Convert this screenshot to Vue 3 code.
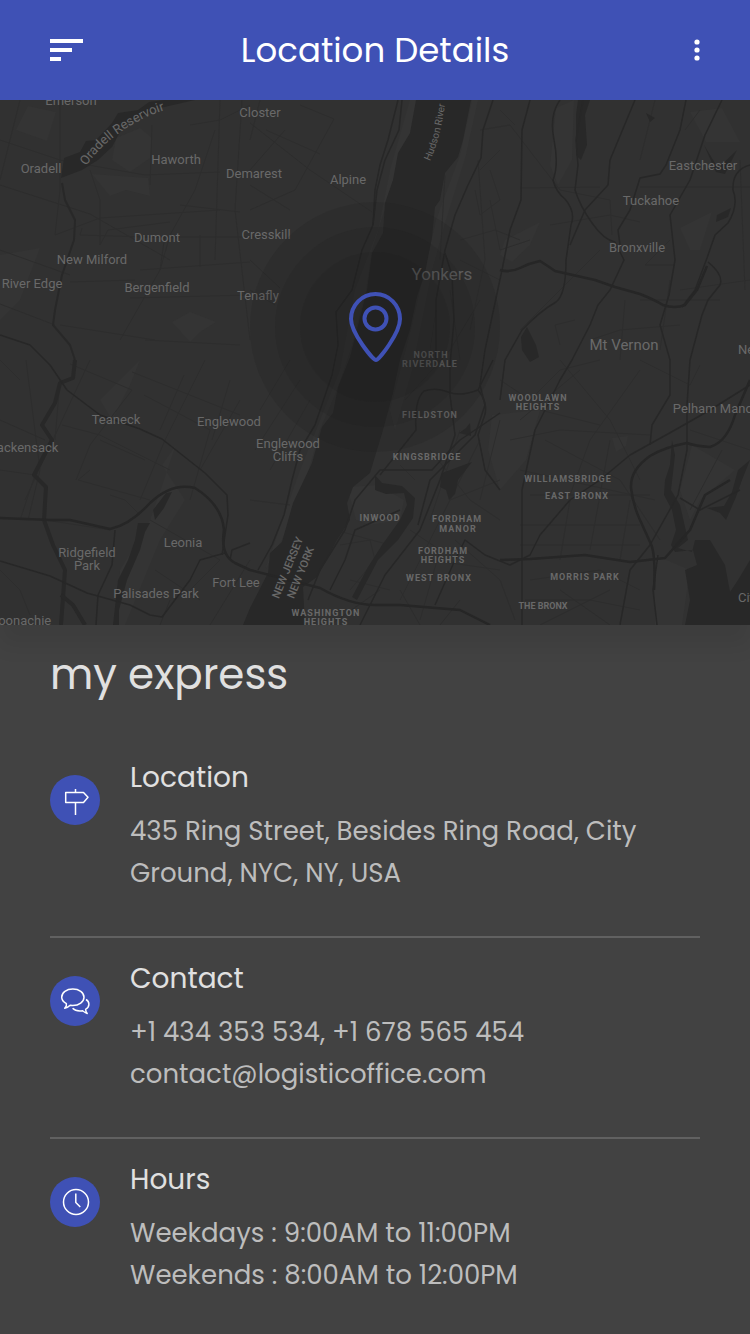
<script setup>
const towns = [
  { t: 'Emerson', x: 71, y: 105 },
  { t: 'Closter', x: 260, y: 117 },
  { t: 'Oradell', x: 41, y: 173 },
  { t: 'Haworth', x: 176, y: 164 },
  { t: 'Demarest', x: 254, y: 178 },
  { t: 'Alpine', x: 348, y: 184 },
  { t: 'Dumont', x: 157, y: 242 },
  { t: 'Cresskill', x: 266, y: 239 },
  { t: 'New Milford', x: 92, y: 264 },
  { t: 'River Edge', x: 32, y: 288 },
  { t: 'Bergenfield', x: 157, y: 292 },
  { t: 'Tenafly', x: 258, y: 300 },
  { t: 'Eastchester', x: 703, y: 170 },
  { t: 'Tuckahoe', x: 651, y: 205 },
  { t: 'Bronxville', x: 637, y: 252 },
  { t: 'Teaneck', x: 116, y: 424 },
  { t: 'Englewood', x: 229, y: 426 },
  { t: 'Englewood', x: 288, y: 448 },
  { t: 'Cliffs', x: 288, y: 461 },
  { t: 'Hackensack', x: 23, y: 452 },
  { t: 'Leonia', x: 183, y: 547 },
  { t: 'Ridgefield', x: 87, y: 557 },
  { t: 'Park', x: 87, y: 570 },
  { t: 'Fort Lee', x: 236, y: 587 },
  { t: 'Palisades Park', x: 156, y: 598 },
  { t: 'Moonachie', x: 19, y: 625 },
  { t: 'Pelham Manor', x: 715, y: 413 },
]
const districts = [
  { t: 'NORTH', x: 431, y: 358 },
  { t: 'RIVERDALE', x: 430, y: 367 },
  { t: 'FIELDSTON', x: 430, y: 418 },
  { t: 'KINGSBRIDGE', x: 427, y: 460 },
  { t: 'WOODLAWN', x: 538, y: 401 },
  { t: 'HEIGHTS', x: 538, y: 410 },
  { t: 'WILLIAMSBRIDGE', x: 568, y: 482 },
  { t: 'EAST BRONX', x: 577, y: 499 },
  { t: 'INWOOD', x: 380, y: 521 },
  { t: 'FORDHAM', x: 457, y: 522 },
  { t: 'MANOR', x: 458, y: 532 },
  { t: 'FORDHAM', x: 443, y: 554 },
  { t: 'HEIGHTS', x: 443, y: 563 },
  { t: 'WEST BRONX', x: 439, y: 581 },
  { t: 'MORRIS PARK', x: 585, y: 580 },
  { t: 'WASHINGTON', x: 326, y: 616 },
  { t: 'HEIGHTS', x: 326, y: 625 },
]
</script>

<template>
  <div class="screen">
    <header class="bar">
      <button class="bar-button" type="button" aria-label="Menu">
        <svg width="34" height="22" viewBox="0 0 34 22" fill="#fff">
          <path d="M0 0H33V4H0ZM0 9H22V13H0ZM0 18H11V22H0Z" />
        </svg>
      </button>
      <h1>Location Details</h1>
      <button class="bar-button more" type="button" aria-label="More options">
        <svg width="6" height="22" viewBox="0 0 6 22" fill="#fff">
          <circle cx="3" cy="3" r="2.6" />
          <circle cx="3" cy="11" r="2.6" />
          <circle cx="3" cy="19" r="2.6" />
        </svg>
      </button>
    </header>

    <svg class="map" viewBox="0 100 750 525" preserveAspectRatio="xMidYMid slice" role="img" aria-label="Map of Yonkers and surroundings">
      <rect y="100" width="750" height="525" fill="#313131" />

      <g class="park">
        <path d="M28 106L56 112L47 141L16 130Z" />
        <path d="M116 138L140 128L152 138L150 158L130 172L112 160Z" />
        <path d="M92 174L148 178L150 196L126 190L110 196Z" />
        <path d="M556 108L574 100L572 160L558 185L550 165Z" />
        <path d="M690 112L722 108L740 142L706 142Z" />
        <path d="M505 240L540 222L530 245L512 262L500 255Z" />
        <path d="M680 228L712 212L700 250L690 250Z" />
        <path d="M172 322L190 312L216 322L200 332L190 342Z" />
        <path d="M0 255L40 248L20 300L0 320Z" />
        <path d="M100 400L140 360L130 385L112 420Z" />
        <path d="M162 465L176 445L150 520L120 570L118 625H125L160 540L185 500Z" />
        <path d="M492 415L540 410L526 460L500 490L488 450Z" />
        <path d="M692 445L735 470L700 500L690 520L680 490Z" />
        <path d="M347 487L378 485L404 500L400 520L370 525L356 520Z" />
        <path d="M612 438L628 436L626 446L616 452Z" />
        <path d="M410 100L417 100L411 135L399 160L388 200L372 250L366 290L352 345L338 387L320 430L306 480L282 540L265 570L300 470L340 370L355 290L378 230L390 170Z" />
        <path d="M472 100L478 100L466 155L446 220L432 270L412 370L395 430L390 410L411 330L436 220L460 155Z" />
        <path d="M655 555L690 570L682 625H655Z" />
      </g>

      <g class="street">
        <path d="M0 140L60 160L145 175L220 172M0 185L90 214L170 260M60 100V190L55 235M20 100L0 180M152 125L150 185M55 235L100 218L220 210M90 170L100 200V245L108 230L170 222M0 250L70 275M70 282L135 280M0 304L55 325M60 325L155 340M145 340L240 345M180 205L240 212M215 130L195 190L170 235L160 270L120 340M220 100L215 260M242 100L235 210L250 340M140 270L250 262M130 298L250 295M165 235L160 270M200 235V267M190 125L220 120L250 105M145 237H280M82 228L80 235L180 238" />
        <path d="M250 123L310 170L372 212M250 210L295 190L334 119L300 105M266 130L320 154M250 185L290 210M250 290L275 305M260 100L250 140M285 130L250 170M250 260L280 288" />
        <path d="M0 360L20 380M70 364L132 390L90 445L76 480M26 360L40 470L28 520M0 420L45 440M62 425L100 435L170 470M90 360L25 500M132 372L240 415M100 440L145 460M144 395L210 430L190 500M184 375L160 430M205 360L165 440L140 500M230 380L212 440M240 400L200 470M90 470L78 480L150 500M110 495L125 500L140 515M150 520L220 560L190 590M155 570L200 600M250 560L210 625M170 600L160 625M0 470L35 475L20 520M60 380L55 440M0 570L20 590L30 615M45 520L110 530" />
        <path d="M480 130L510 125L560 190L610 200M490 200L500 250L530 240M520 188L600 187M550 225L610 215L640 222M610 200L612 235M500 110L515 125M640 187H750M520 330L560 290L600 250M575 320L555 325L560 345M670 240L645 265H675M680 290L750 280M640 300H720M625 300L620 360M590 340L620 330L680 325M740 160L745 290M655 100L640 160M670 280L660 350M700 110L685 130" />
        <path d="M500 380L530 400L560 370L600 360M545 440L620 480L660 540M560 360L610 420L640 480M520 470L610 490L655 500M530 495H650M520 525H640M520 545H640M570 500L560 560M610 440L590 550M630 500L620 560M530 580L600 570L640 590M525 600L590 600L640 610M560 590L610 625M610 590L540 625M640 370L590 440L570 495M510 440L560 430L650 435M540 410L600 425M640 360L690 385L700 365M690 430L750 450M580 370L520 420M500 580L515 620M722 450L690 510" />
        <path d="M430 450L470 500L500 520M480 440L440 520L400 600M450 500L500 480M410 530L440 550L420 620M455 540L500 580M380 590L330 625M415 480L400 465M340 545L370 540L375 560L350 590M335 530L390 545M350 580L390 590M430 560L500 570M400 590L420 625M460 600L440 625M300 380L255 450M310 400L270 470M290 360L260 410M460 430L430 520M250 500L290 505M480 500L500 420" />
        <path d="M480 170L500 150M490 170L500 200L480 215L475 190M460 240L495 230L520 240M460 260L500 280M436 310L430 350M450 290L460 360M405 400L450 350L480 300M445 175L440 260M478 160L485 260L470 330" />
      </g>

      <g class="water">
        <path d="M416 100L410 133L398 153L393 180L385 203L383 233L372 253L367 290L350 357L338 387L333 413L322 427L312 463L293 503L282 542L270 553L268 573L250 608L243 625H305L303 587L317 577L337 540L350 520L347 503L353 487L370 473L383 430L393 393L400 360L410 330L417 297L425 273L432 237L435 207L440 200L445 173L458 157L463 140L471 100Z" />
        <path d="M61 178L64 158L80 152L86 141L96 140L112 123L118 113L138 110L149 102L165 100H195L160 108L148 114L128 123L120 132L112 147L98 160L82 170Z" />
        <path d="M578 100H590L585 115L587 145L581 160L576 155L576 115Z" />
        <path d="M704 145L718 168L737 150L725 174L716 172Z" />
        <path d="M646 113L655 118L650 122ZM717 215L731 208L728 217L716 222Z" />
        <path d="M521 337L527 327L536 345L539 357L530 362L522 350Z" />
        <path d="M442 473L472 462L458 480L455 494L449 500L446 490L440 487Z" />
        <path d="M166 493L172 492L164 508L155 520L153 510ZM138 523L150 523L145 532L140 550L127 580L119 610V625H113L118 580L128 560L135 540Z" />
        <path d="M375 475L382 483L402 486L415 498L413 518L398 540L378 560L357 600L352 597L368 567L382 545L400 520L407 505L404 493L386 494L375 490Z" />
        <path d="M672 440L675 455L671 490L680 505L688 540L678 548L692 552L695 540L710 540L725 565L730 592L738 580L750 560V625H685L690 600L685 570L697 565L693 550L675 552L671 545L676 530L672 510L664 495L665 480L670 465Z" />
        <path d="M750 460L742 480L736 497L726 520L720 513L707 508L724 506L732 492L738 470Z" />
        <path d="M470 423L471 436L459 433L466 428Z" />
      </g>

      <g class="river">
        <path d="M62 183L65 200L75 220L74 240L62 275L55 310L53 325L70 345L75 360" stroke-width="2" />
        <path d="M75 360L73 378L60 383L55 403L42 425L52 440L34 475L46 487L44 520L53 545L65 570L61 625" stroke-width="4" />
        <path d="M61 595L73 605L85 625" stroke-width="4" />
      </g>

      <g class="road">
        <path d="M0 335L30 345L50 365L67 390L100 415L140 429L162 439L205 473L227 495L228 515L222 555" />
        <path d="M0 561L50 576L87 593L130 605L150 615L162 617L190 580L200 560L225 553" />
        <path d="M115 530L112 565L98 595L96 625" />
        <path d="M398 100L388 140L380 165L375 190L373 225L362 250L352 290L336 312L338 345L332 375L315 425L300 450L292 480L284 515L272 545L258 570" />
        <path d="M402 100L399 130L385 160L377 190L373 225" />
        <path d="M493 100L483 130L481 158L468 185L455 215L445 250L436 300V360" />
        <path d="M445 253L452 275L454 320L450 365L450 395L455 435L440 480L420 530L385 575L360 625" />
        <path d="M530 100L522 130L521 200L510 230L502 270L485 350L480 385L485 405L475 435L430 480L418 525" />
        <path d="M560 100Q549 115 554 140T553 180Q556 192 565 199Q576 212 571 225L566 260Q566 295 556 302Q540 311 522 330L505 360L500 400" />
        <path d="M583 100L576 140L578 165L575 190Q580 206 592 223T615 242L624 260L610 290L598 305L590 325L572 360L560 380L535 430L522 490V625" />
        <path d="M635 100L610 160L608 185L585 210L570 245" />
        <path d="M686 100L680 130L666 165L660 174L640 178L630 210L618 230L620 245" />
        <path d="M722 100L705 135L690 180L670 215L675 260L669 295L660 325L670 360L670 395L652 425L650 445" />
        <path d="M750 165Q732 170 733 190Q739 205 728 223L715 235L707 258L695 290L682 307M708 262Q724 275 720 285L708 300L702 315L690 360L687 405L687 450L678 495L650 545L630 570L620 625" />
        <path d="M750 385L710 410L675 430L630 455L600 480L570 500L540 535L530 555L510 565L485 555L465 540L455 560L435 605" />
        <path d="M500 413L475 430L460 440L450 450L432 470L380 470L355 500L345 530L320 570L308 600" />
        <path d="M658 555L653 590L657 625M680 498L700 510L740 490M250 543L232 550L230 560M400 510L355 530L345 560L330 590" />
        <path d="M493 360L478 390Q460 397 448 392T424 391Q414 400 416 430L380 475M478 390Q490 405 483 420L478 435L485 470L500 490" />
      </g>

      <g class="highway">
        <path d="M0 518L50 520H70L110 529Q130 525 150 503Q172 482 195 488Q222 505 224 530Q220 555 235 563L250 570L320 588Q350 605 375 605H400L460 610L490 625" />
        <path d="M500 270Q510 273 520 268T540 261Q548 266 555 271L595 280L615 287L640 294Q655 300 663 305Q675 309 685 305L697 290L707 266" />
        <path d="M750 380L735 415Q727 442 710 447Q695 446 687 443Q665 447 650 456Q630 470 631 488Q633 505 640 520L650 542Q656 552 654 590" />
        <path d="M500 560L530 559L585 555L630 562L665 558L690 530L705 495L730 480" />
      </g>

      <g class="label town">
        <text v-for="(l, i) in towns" :key="i" :x="l.x" :y="l.y">{{ l.t }}</text>
        <text class="start" x="738" y="354">New Rochelle</text>
        <text class="start" x="738" y="602">City Island</text>
      </g>
      <g class="label">
        <text class="yonkers" x="442" y="280">Yonkers</text>
        <text class="vernon" x="624" y="350">Mt Vernon</text>
      </g>
      <g class="label district">
        <text v-for="(l, i) in districts" :key="i" :x="l.x" :y="l.y">{{ l.t }}</text>
      </g>
      <g class="label bronx"><text x="543" y="609">THE BRONX</text></g>
      <path id="reservoir" d="M86 166Q114 127 165 110" fill="none" />
      <g class="label town"><text class="start"><textPath href="#reservoir">Oradell Reservoir</textPath></text></g>
      <path id="hudson" d="M430 161Q441 138 446 96" fill="none" />
      <g class="label hudson"><text class="start"><textPath href="#hudson">Hudson River</textPath></text></g>
      <g class="label state">
        <text transform="translate(291 569) rotate(-68)">NEW JERSEY</text>
        <text transform="translate(304 574) rotate(-68)">NEW YORK</text>
      </g>

      <g fill="#202020" fill-opacity="0.17">
        <circle cx="375" cy="327" r="125" />
        <circle cx="375" cy="327" r="100" />
        <circle cx="375" cy="327" r="75" />
      </g>
      <g class="pin">
        <path d="M376 360C373 360 351 333 351 319A24.5 25 0 0 1 400 319C400 333 379 360 376 360Z" />
        <circle cx="375.5" cy="318.5" r="11" />
      </g>
    </svg>

    <main class="content">
      <h2>my express</h2>

      <section class="item">
        <span class="badge">
          <svg width="50" height="50" viewBox="0 0 50 50">
            <path d="M25.5 14V17M25.5 28V40M15.7 17.5H33.5L38 22.3L33.5 27.5H15.7Z" />
          </svg>
        </span>
        <div class="text">
          <h3>Location</h3>
          <p>435 Ring Street, Besides Ring Road, City Ground, NYC, NY, USA</p>
        </div>
      </section>

      <section class="item">
        <span class="badge">
          <svg width="50" height="50" viewBox="0 0 50 50">
            <path d="M14.7 32.2C16.3 30.7 16.8 29.3 16.4 27.6C13.5 26 11.7 23.8 11.7 21.2C11.7 16.5 16.5 13 22.8 13S34 16.5 34 21.2S29 29.5 22.8 29.5L20.2 29.3C18.5 31 17 31.9 14.7 32.2Z" />
            <path d="M36 23.5C39.7 25.7 40.2 30.5 35.6 33.3C35.6 35 36 36 37.2 37.4C35.2 37 34 36 32.6 34.8C28.5 35.4 24.8 34.6 22.6 32.3" />
          </svg>
        </span>
        <div class="text">
          <h3>Contact</h3>
          <p>
            <a href="tel:+1434353534">+1 434 353 534</a>, <a href="tel:+1678565454">+1 678 565 454</a><br />
            <a href="mailto:contact@logisticoffice.com">contact@logisticoffice.com</a>
          </p>
        </div>
      </section>

      <section class="item">
        <span class="badge">
          <svg width="50" height="50" viewBox="0 0 50 50">
            <circle cx="26" cy="25" r="12.5" />
            <path d="M25.8 16.5V25.5L30.3 30" />
          </svg>
        </span>
        <div class="text">
          <h3>Hours</h3>
          <p>Weekdays : 9:00AM to 11:00PM<br />Weekends : 8:00AM to 12:00PM</p>
        </div>
      </section>
    </main>
  </div>
</template>

<style>
body {
  background: #424242;
}
</style>

<style scoped>
.screen {
  min-height: 100vh;
  background: #424242;
  color: #e0e0e0;
  font-family: Poppins, Inter, "Liberation Sans", sans-serif;
}
h1, h2, h3, p {
  margin: 0;
  font-weight: 400;
}
.bar {
  display: grid;
  grid-template-columns: 50px 1fr 50px;
  align-items: center;
  height: 100px;
  padding: 0 50px;
  background: #3f51b5;
}
.bar-button {
  display: flex;
  align-items: center;
  height: 50px;
  padding: 0;
  border: 0;
  background: none;
}
.more {
  justify-content: flex-end;
}
.bar h1 {
  color: #fff;
  font-size: 34px;
  line-height: 50px;
  text-align: center;
}
.map {
  display: block;
  width: 100%;
  height: auto;
  box-shadow: 0 20px 20px rgba(0, 0, 0, 0.08);
}
.park {
  fill: #343434;
}
.street {
  fill: none;
  stroke: #2d2d2d;
  stroke-width: 1;
}
.water {
  fill: #282828;
}
.river {
  fill: none;
  stroke: #282828;
  stroke-linejoin: round;
}
.road {
  fill: none;
  stroke: #272727;
  stroke-width: 1.5;
  stroke-linejoin: round;
}
.highway {
  fill: none;
  stroke: #262626;
  stroke-width: 2.5;
  stroke-linejoin: round;
}
.label {
  fill: #696969;
  font-family: Roboto, sans-serif;
  text-anchor: middle;
}
.start {
  text-anchor: start;
}
.town {
  font-size: 13px;
}
.yonkers {
  font-size: 17px;
}
.vernon {
  font-size: 15px;
}
.district {
  font-size: 9px;
  font-weight: 700;
  letter-spacing: 1px;
}
.bronx {
  font-size: 9px;
  font-weight: 700;
}
.hudson {
  font-size: 10px;
}
.state {
  font-size: 11px;
  font-weight: 500;
}
.pin {
  fill: none;
  stroke: #3f51b5;
  stroke-width: 4;
  stroke-linejoin: round;
}
.content {
  padding: 20px 50px 0;
}
h2 {
  margin-bottom: 32px;
  font-size: 42px;
  line-height: 60px;
}
.item {
  display: flex;
  gap: 30px;
  padding: 19px 0 42px;
  border-bottom: 2px solid #616161;
}
.item:last-child {
  padding-bottom: 36px;
  border-bottom: 0;
}
.badge {
  flex: none;
  width: 50px;
  height: 50px;
  margin-top: 19px;
  border-radius: 50%;
  background: #3f51b5;
}
.badge svg {
  display: block;
  fill: none;
  stroke: #fff;
  stroke-width: 1.5;
  stroke-linejoin: round;
}
.text {
  flex: 1;
}
h3 {
  margin-bottom: 10px;
  font-size: 28px;
  line-height: 44px;
}
p {
  color: #bdbdbd;
  font-size: 26px;
  line-height: 42px;
}
a {
  color: inherit;
  text-decoration: none;
}
</style>
